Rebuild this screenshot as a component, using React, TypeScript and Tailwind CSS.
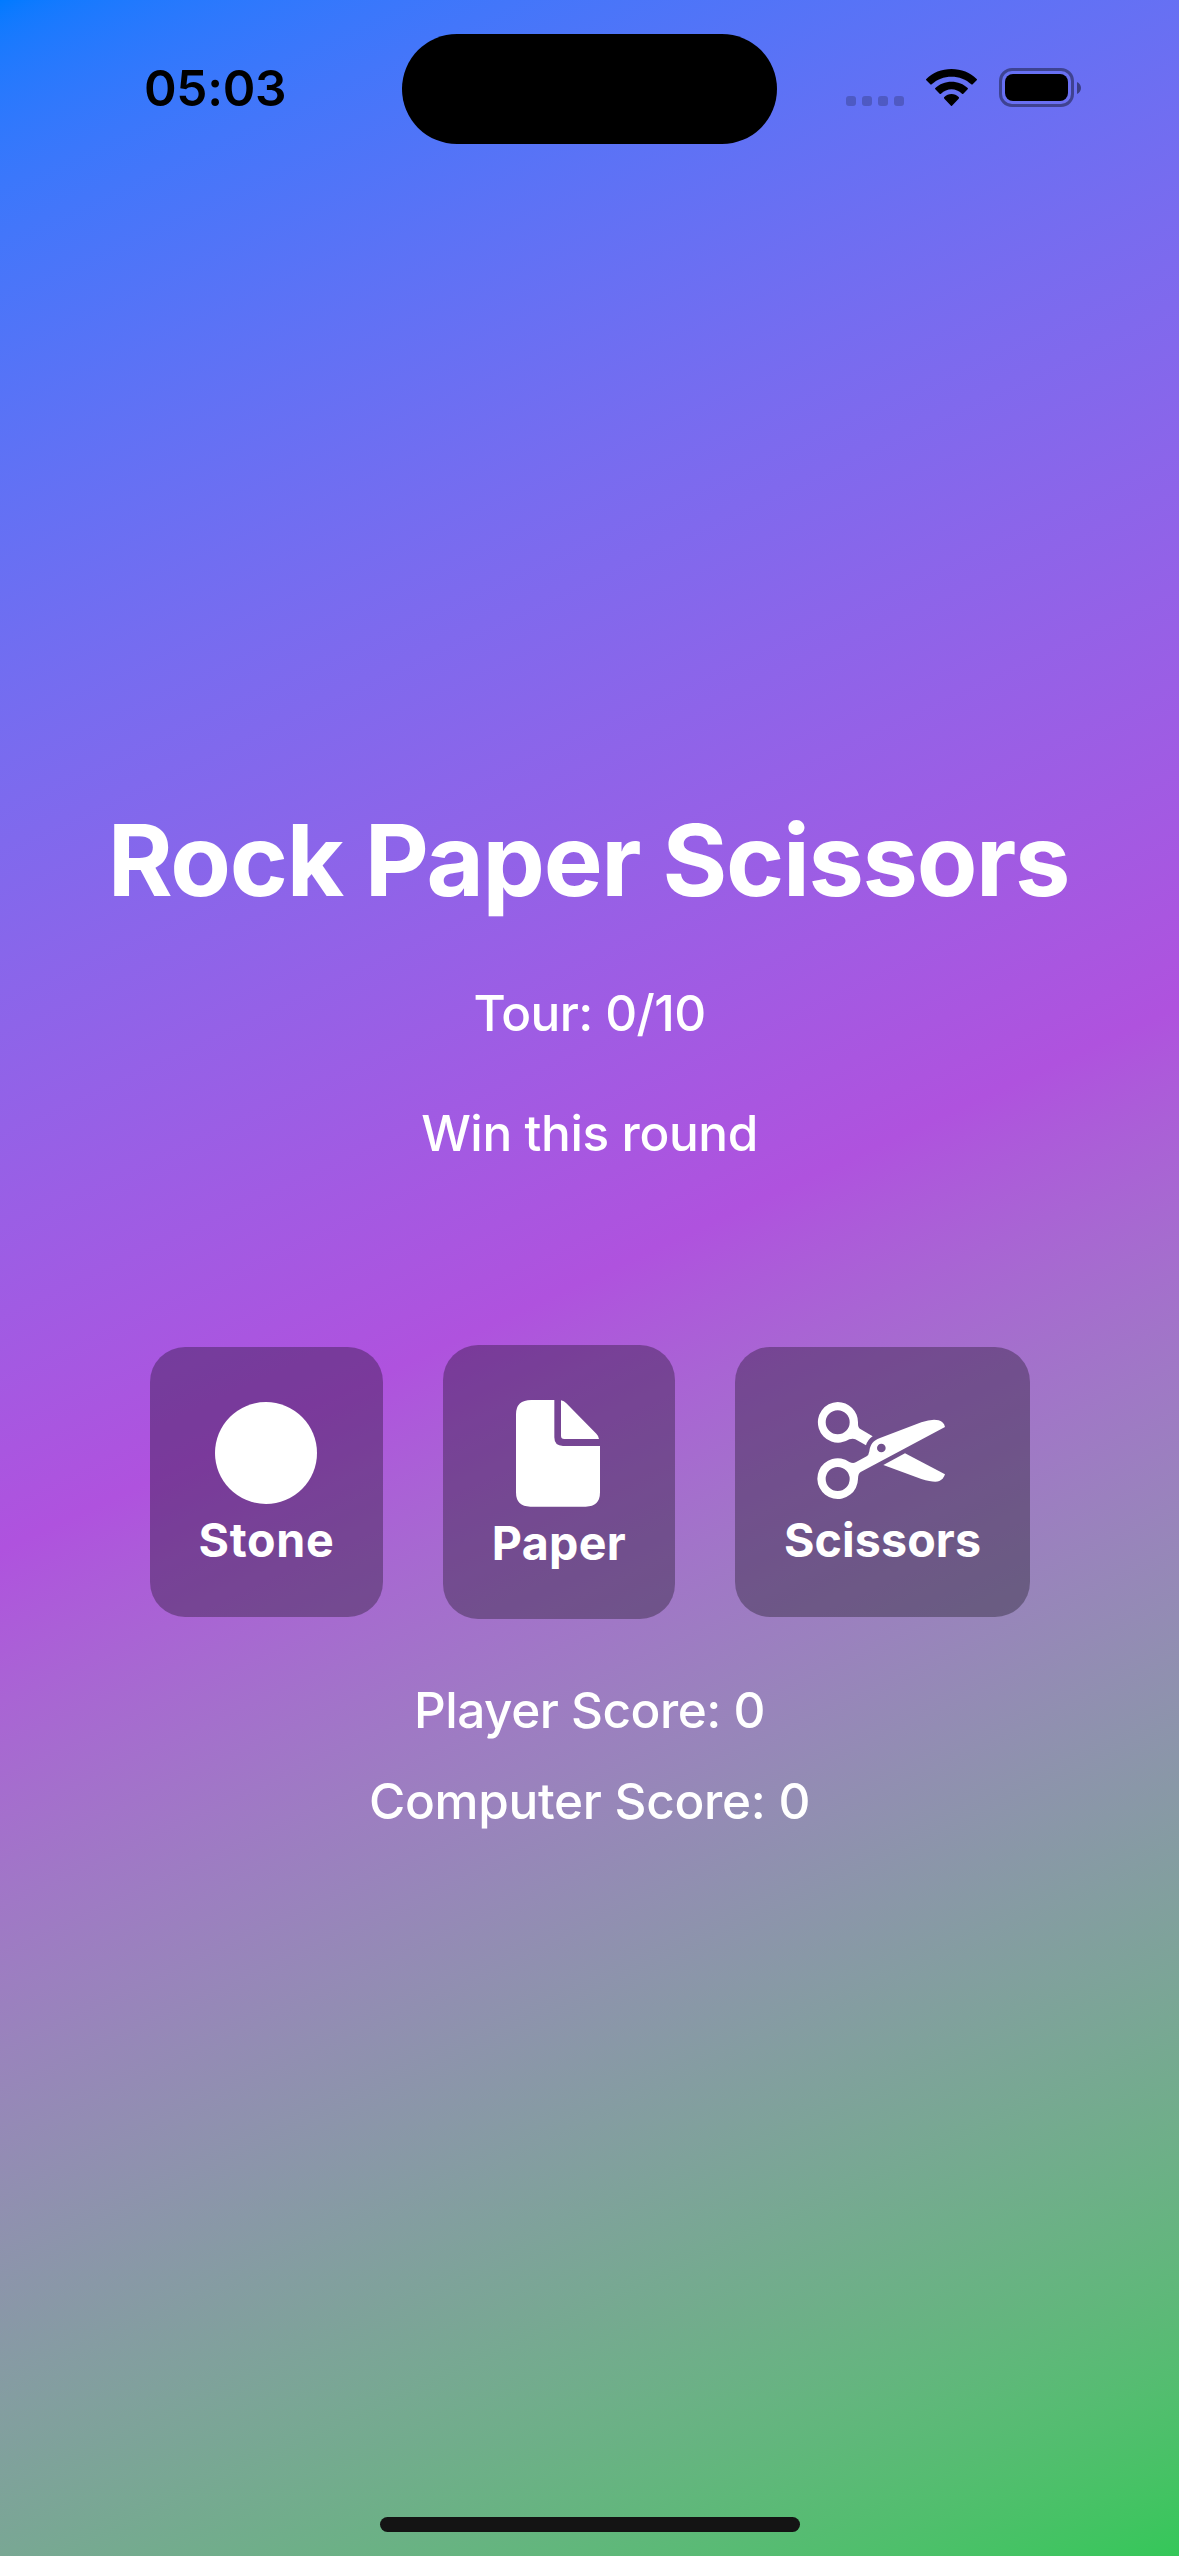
import type { ReactNode } from "react";

function StatusBar() {
  return (
    <header className="grid h-[144px] grid-cols-[402px_375px_402px] pt-[34px]">
      <div className="flex h-[110px] items-start pl-[144px] pt-[24px]">
        <span className="text-[49.5px] font-semibold leading-[60px] tracking-[-0.3px] text-black">05:03</span>
      </div>
      <div className="h-[110px] rounded-full bg-black" />
      <div className="flex h-[110px] items-start pl-[69px] pt-[34px]">
        <div className="flex gap-[6px] pt-[28px]">
          {[0, 1, 2, 3].map((i) => (
            <span key={i} className="size-[10px] rounded-[3px] bg-black/20" />
          ))}
        </div>
        <svg className="ml-[22px] mt-[1px] h-[37px] w-[51px]" viewBox="528 147 153 111">
          <path d="M604.5 147C634 147 661 158 680 177Q682 179 680 181L668 193Q666 195 664 193C648 178 627 170 604.500 170S561 178 545 193Q543 195 541 193L529 181Q527 179 529 177C548 158 575 147 604.500 147Z" />
          <path d="M604.500 185C623 185 641 192 653 204Q655 206 653 208L640 221Q638 223 636 221C627 213 616 208 604.500 208S582 213 573 221Q571 223 569 221L556 208Q554 206 556 204C568 192 586 185 604.500 185Z" />
          <path d="M604.500 222C613 222 620 225 626 231Q628 233 626 236L606 257Q604.500 259 603 257L583 236Q581 233 583 231C589 225 596 222 604.500 222Z" />
        </svg>
        <div className="ml-[22px] flex items-center">
          <div className="h-[39px] w-[75px] rounded-[13px] border-[3px] border-black/40 p-[3px]">
            <div className="h-[27px] w-[63px] rounded-[8px] bg-black" />
          </div>
          <svg className="ml-[3px] h-[12px] w-[4px]" viewBox="0 0 4 12">
            <path d="M0 0C2.500 1 4 3.500 4 6S2.500 11 0 12Z" fill="black" fillOpacity="0.45" />
          </svg>
        </div>
      </div>
    </header>
  );
}

function ScissorsIcon() {
  return (
    <svg className="mr-[3px] h-[97.3px] w-[128px]" viewBox="291 215 384 292" fill="white">
      <path
        fillRule="evenodd"
        d="M353 215a61 61 0 0 1 61 61Q413 291 421 296L458 318Q443 328 438 345L406 327Q399 323 388 327A61 61 0 1 1 353 215ZM353 240a36 36 0 1 0 0 72a36 36 0 1 0 0-72Z"
      />
      <path
        fillRule="evenodd"
        d="M388 395Q399 400 407 396L440 378Q446 375 448 363C451 342 459 331 480 323L604 276Q636 265 656 270Q672 275 675 290L422 425Q414 430 414 446A61 61 0 1 1 388 395ZM353 410a36 36 0 1 0 0 72a36 36 0 1 0 0-72ZM484 340a13 13 0 1 0 0 26a13 13 0 1 0 0-26Z"
      />
      <path d="M555 369L675 432Q671 446 658 452Q644 458 604 446L490 404Z" />
    </svg>
  );
}

function PaperIcon() {
  return (
    <svg className="mr-[2px] h-[106.7px] w-[84px]" viewBox="258 210 252 320" fill="white">
      <path d="M304 210H373V322Q373 348 399 348H510V487Q510 530 467 530H301Q258 530 258 487V253Q258 210 304 210Z" />
      <path d="M393 211Q402 213 409 220L499 311Q507 319 507 327H403Q393 327 393 317Z" />
    </svg>
  );
}

function Choice({ size, label, children }: { size: string; label: string; children: ReactNode }) {
  return (
    <button className={`flex flex-col items-center rounded-[35px] bg-black/30 pt-[55px] ${size}`}>
      {children}
      <span className="pl-[1px] text-[46.6px] font-bold leading-[60px]">{label}</span>
    </button>
  );
}

export default function App() {
  return (
    <div className="flex h-[2556px] w-[1179px] flex-col overflow-hidden bg-[linear-gradient(155.24deg_in_oklab,#007aff_0%,#af52de_50%,#34c759_100%)] font-[Inter,sans-serif] text-white">
      <StatusBar />
      <main className="flex flex-1 flex-col items-center pt-[656px] text-[49.5px] font-medium leading-[60px]">
        <h1 className="whitespace-nowrap pr-[2px] text-[99px] font-bold leading-[120px] tracking-[-1.32px]">
          Rock Paper Scissors
        </h1>
        <p className="mt-[63px] tracking-[-0.6px]">Tour: 0/10</p>
        <p className="mt-[60px] tracking-[-0.4px]">Win this round</p>
        <div className="mt-[182px] flex h-[274px] items-center gap-[60px]">
          <Choice size="h-[270px] w-[233px] tracking-[0.7px]" label="Stone">
            <div className="mb-[6px] size-[102px] rounded-full bg-white" />
          </Choice>
          <Choice size="h-[274px] w-[232px] tracking-[0.3px]" label="Paper">
            <div className="mb-[6px]">
              <PaperIcon />
            </div>
          </Choice>
          <Choice size="h-[270px] w-[295px] tracking-[0.1px]" label="Scissors">
            <div className="mb-[6px] h-[102px]">
              <ScissorsIcon />
            </div>
          </Choice>
        </div>
        <p className="mt-[61px] tracking-[-0.5px]">Player Score: 0</p>
        <p className="mt-[31px] tracking-[-0.3px]">Computer Score: 0</p>
      </main>
      <footer className="flex justify-center pb-[24px]">
        <div className="h-[15px] w-[420px] rounded-full bg-[#141414]" />
      </footer>
    </div>
  );
}
